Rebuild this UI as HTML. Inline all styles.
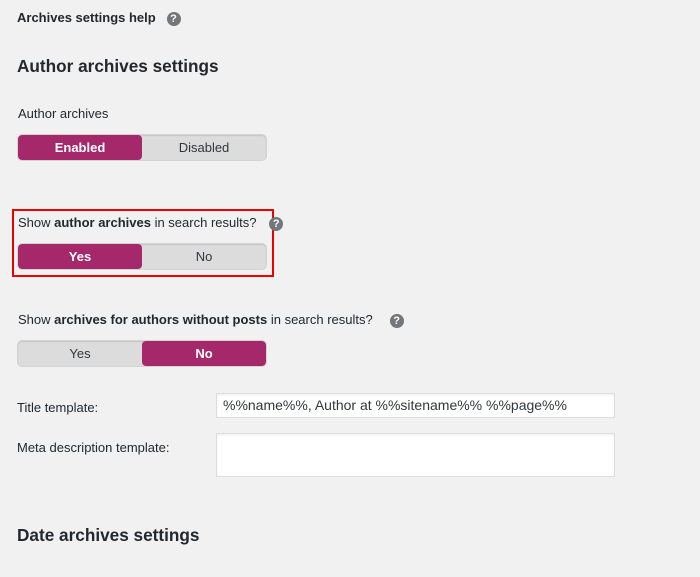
<!DOCTYPE html><html><head><style>
body{margin:0;width:700px;height:577px;background:#f1f1f1;font-family:"Liberation Sans",sans-serif;color:#23282d;position:relative;overflow:hidden}
.a{position:absolute;white-space:nowrap}
.q{display:inline-block;width:14px;height:14px;border-radius:50%;background:#72777c;color:#fff;font-size:11px;font-weight:bold;text-align:center;line-height:14px;vertical-align:middle}
.t{position:absolute;left:17px;width:248px;height:25px;border:1px solid #d4d4d4;border-radius:5px;background:#dcdcdc;display:flex;font-size:13px;overflow:hidden;box-shadow:inset 0 1px 1px rgba(0,0,0,.1)}
.t span{flex:1;text-align:center;line-height:25px;color:#32373c}
.t .on{background:#a4286a;color:#fff;font-weight:bold;border-radius:4px}
.l{font-size:13px;color:#23282d}
.in{position:absolute;left:216px;width:397px;background:#fff;border:1px solid #ddd;box-shadow:inset 0 1px 2px rgba(0,0,0,.07)}
</style></head><body>
<div class="a" style="left:17px;top:10px;font-size:13px;font-weight:bold">Archives settings help &nbsp;&nbsp;<span class="q">?</span></div>
<div class="a" style="left:17px;top:56px;font-size:17.2px;font-weight:bold">Author archives settings</div>
<div class="a l" style="left:18px;top:106px">Author archives</div>
<div class="t" style="top:134px"><span class="on">Enabled</span><span>Disabled</span></div>
<div class="a" style="left:12px;top:209px;width:258px;height:64px;border:2px solid #e00"></div>
<div class="a l" style="left:18px;top:215px">Show <b>author archives</b> in search results? &nbsp;&nbsp;<span class="q" style="margin-left:2px">?</span></div>
<div class="t" style="top:243px"><span class="on">Yes</span><span>No</span></div>
<div class="a l" style="left:18px;top:312px">Show <b>archives for authors without posts</b> in search results? &nbsp;&nbsp;<span class="q" style="margin-left:6px">?</span></div>
<div class="t" style="top:340px"><span>Yes</span><span class="on">No</span></div>
<div class="a l" style="left:17px;top:400px">Title template:</div>
<div class="in" style="top:393px;height:23px;font-size:14px;line-height:23px;padding-left:6px;width:391px;color:#32373c">%%name%%, Author at %%sitename%% %%page%%</div>
<div class="a l" style="left:17px;top:440px">Meta description template:</div>
<div class="in" style="top:433px;height:42px"></div>
<div class="a" style="left:17px;top:525px;font-size:17.2px;font-weight:bold">Date archives settings</div>
</body></html>
